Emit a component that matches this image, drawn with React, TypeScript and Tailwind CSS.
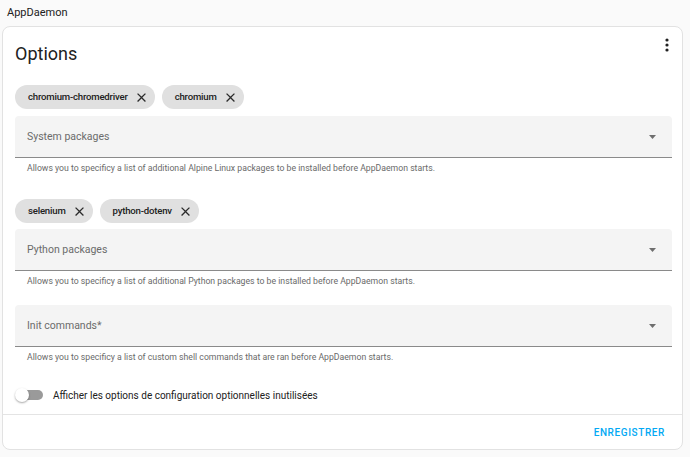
const font = { fontFamily: 'Roboto, "Liberation Sans", sans-serif' };

function CloseIcon() {
  return (
    <svg width="15" height="15" viewBox="0 0 24 24" className="fill-[#2b2b2b]">
      <path d="M19 6.41L17.59 5 12 10.59 6.41 5 5 6.41 10.59 12 5 17.59 6.41 19 12 13.41 17.59 19 19 17.59 13.41 12z" />
    </svg>
  );
}

function Chip({ label }: { label: string }) {
  return (
    <div className="flex h-[24px] items-center gap-[6px] rounded-full bg-[#e0e0e0] pl-[13px] pr-[6px]">
      <span className="text-[9.6px] font-medium tracking-[-0.2px] text-[#212121]">{label}</span>
      <CloseIcon />
    </div>
  );
}

function SelectField({ label, helper }: { label: string; helper: string }) {
  return (
    <div>
      <div className="flex h-[42px] items-center justify-between rounded-t-[4px] border-b border-[#8a8a8a] bg-[#f4f4f4] pl-[12px] pr-[16px]">
        <span className="text-[10.5px] text-[#6b6b6b]">{label}</span>
        <svg width="7" height="4" viewBox="0 0 7 4">
          <polygon points="0,0 7,0 3.5,4" fill="#6e6e6e" />
        </svg>
      </div>
      <div className="mt-[4px] px-[12px] text-[8.7px] leading-[12px] text-[#6a6a6a]">{helper}</div>
    </div>
  );
}

export default function App() {
  return (
    <div className="h-screen w-full bg-[#fafafa] text-[#212121]" style={font}>
      <div className="flex h-[26px] items-center px-[7px] text-[11px]">AppDaemon</div>
      <div className="ml-[2px] w-[681px] rounded-[8px] border border-[#e2e2e2] bg-white">
        <div className="flex items-start justify-between pl-[12px] pr-[13px] pt-[15px]">
          <h1 className="text-[18px] leading-[24px]">Options</h1>
          <svg width="4" height="14" viewBox="0 0 4 14" className="mt-[-4px]">
            <circle cx="2" cy="2" r="1.6" fill="#212121" />
            <circle cx="2" cy="7" r="1.6" fill="#212121" />
            <circle cx="2" cy="12" r="1.6" fill="#212121" />
          </svg>
        </div>

        <div className="pl-[12px] pr-[10px]">
          <div className="mt-[19px] flex gap-[7px]">
            <Chip label="chromium-chromedriver" />
            <Chip label="chromium" />
          </div>
          <div className="mt-[7px]">
            <SelectField
              label="System packages"
              helper="Allows you to specificy a list of additional Alpine Linux packages to be installed before AppDaemon starts."
            />
          </div>

          <div className="mt-[25px] flex gap-[7px]">
            <Chip label="selenium" />
            <Chip label="python-dotenv" />
          </div>
          <div className="mt-[6px]">
            <SelectField
              label="Python packages"
              helper="Allows you to specificy a list of additional Python packages to be installed before AppDaemon starts."
            />
          </div>

          <div className="mt-[18px]">
            <SelectField
              label="Init commands*"
              helper="Allows you to specificy a list of custom shell commands that are ran before AppDaemon starts."
            />
          </div>

          <div className="mt-[22px] mb-[9px] flex h-[20px] items-center gap-[10px]">
            <div className="relative h-[14px] w-[28px]">
              <div className="absolute left-[6px] top-[2px] h-[10px] w-[22px] rounded-full bg-[#9a9a9a]" />
              <div className="absolute left-0 top-0 h-[14px] w-[14px] rounded-full bg-white shadow-[0_1px_2px_rgba(0,0,0,0.35)]" />
            </div>
            <span className="text-[10px] text-[#212121]">
              Afficher les options de configuration optionnelles inutilisées
            </span>
          </div>
        </div>

        <div className="flex h-[35px] items-center justify-end border-t border-[#e4e4e4] pr-[17px]">
          <span className="text-[10px] font-medium tracking-[0.06em] text-[#03a9f4]">ENREGISTRER</span>
        </div>
      </div>
    </div>
  );
}
